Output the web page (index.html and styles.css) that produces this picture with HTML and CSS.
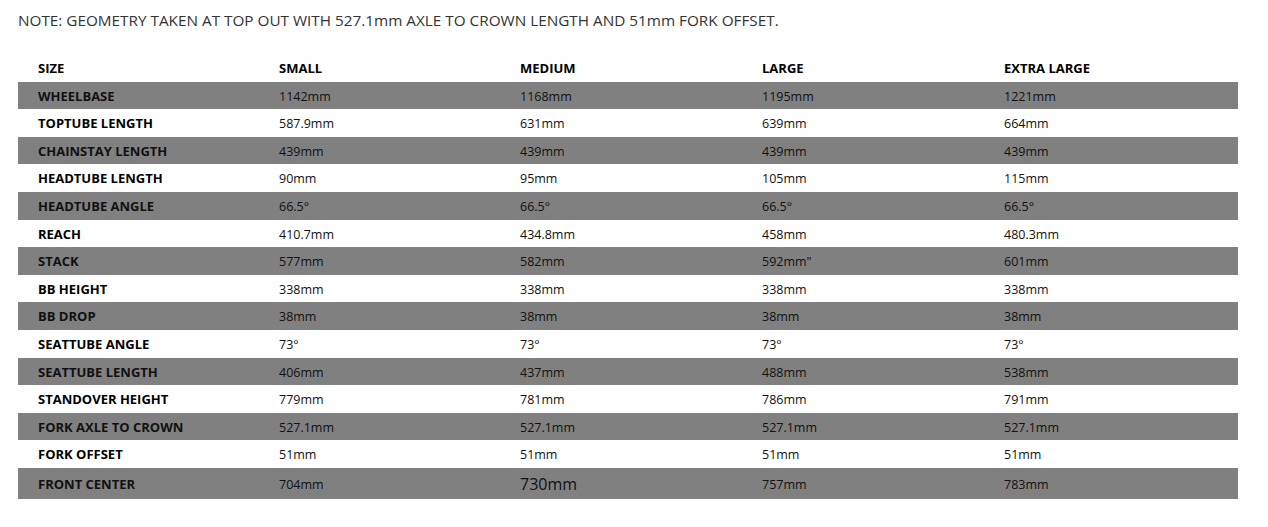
FILE: index.html
```html
<!DOCTYPE html>
<html lang="en">
<head>
<meta charset="utf-8">
<title>Geometry</title>
<link rel="stylesheet" href="styles.css">
</head>
<body>
<p class="note">NOTE: GEOMETRY TAKEN AT TOP OUT WITH 527.1mm AXLE TO CROWN LENGTH AND 51mm FORK OFFSET.</p>
<table class="geo">
  <colgroup>
    <col class="c1"><col class="c2"><col class="c3"><col class="c4"><col class="c5">
  </colgroup>
  <thead>
    <tr><th>SIZE</th><th>SMALL</th><th>MEDIUM</th><th>LARGE</th><th>EXTRA LARGE</th></tr>
  </thead>
  <tbody>
    <tr><th>WHEELBASE</th><td>1142mm</td><td>1168mm</td><td>1195mm</td><td>1221mm</td></tr>
    <tr><th>TOPTUBE LENGTH</th><td>587.9mm</td><td>631mm</td><td>639mm</td><td>664mm</td></tr>
    <tr><th>CHAINSTAY LENGTH</th><td>439mm</td><td>439mm</td><td>439mm</td><td>439mm</td></tr>
    <tr><th>HEADTUBE LENGTH</th><td>90mm</td><td>95mm</td><td>105mm</td><td>115mm</td></tr>
    <tr><th>HEADTUBE ANGLE</th><td>66.5°</td><td>66.5°</td><td>66.5°</td><td>66.5°</td></tr>
    <tr><th>REACH</th><td>410.7mm</td><td>434.8mm</td><td>458mm</td><td>480.3mm</td></tr>
    <tr><th>STACK</th><td>577mm</td><td>582mm</td><td>592mm"</td><td>601mm</td></tr>
    <tr><th>BB HEIGHT</th><td>338mm</td><td>338mm</td><td>338mm</td><td>338mm</td></tr>
    <tr><th>BB DROP</th><td>38mm</td><td>38mm</td><td>38mm</td><td>38mm</td></tr>
    <tr><th>SEATTUBE ANGLE</th><td>73°</td><td>73°</td><td>73°</td><td>73°</td></tr>
    <tr><th>SEATTUBE LENGTH</th><td>406mm</td><td>437mm</td><td>488mm</td><td>538mm</td></tr>
    <tr><th>STANDOVER HEIGHT</th><td>779mm</td><td>781mm</td><td>786mm</td><td>791mm</td></tr>
    <tr><th>FORK AXLE TO CROWN</th><td>527.1mm</td><td>527.1mm</td><td>527.1mm</td><td>527.1mm</td></tr>
    <tr><th>FORK OFFSET</th><td>51mm</td><td>51mm</td><td>51mm</td><td>51mm</td></tr>
    <tr><th>FRONT CENTER</th><td>704mm</td><td><span class="big">730mm</span></td><td>757mm</td><td>783mm</td></tr>
  </tbody>
</table>
</body>
</html>
```
FILE: styles.css
```css
html, body {
  margin: 0;
  padding: 0;
  background: #fff;
}
body {
  font-family: "Open Sans", "Noto Sans", "Liberation Sans", sans-serif;
  color: #111;
}
.note {
  margin: 0;
  padding: 9px 18px 0 18px;
  font-size: 15.3px;
  line-height: 22px;
  color: #333;
}
.geo {
  margin: 23px 0 0 18px;
  width: 1220px;
  border-collapse: collapse;
  table-layout: fixed;
}
.c1, .c2 { width: 241px; }
.c3, .c4 { width: 242px; }
.c5 { width: 254px; }
.geo th, .geo td {
  padding: 5px 20px 3px 20px;
  height: 19.6px;
  line-height: 19.6px;
  text-align: left;
  vertical-align: middle;
  white-space: nowrap;
}
.geo th {
  font-size: 13px;
  font-weight: 700;
  color: #000;
}
.geo td {
  font-size: 12.5px;
  font-weight: 400;
  color: #111;
}
.geo tbody tr:nth-child(odd) {
  background: #808080;
}
.geo tbody tr:nth-child(odd) td,
.geo tbody tr:nth-child(odd) th {
  color: #111;
}
.big {
  font-size: 16px;
  line-height: 23px;
}
```
